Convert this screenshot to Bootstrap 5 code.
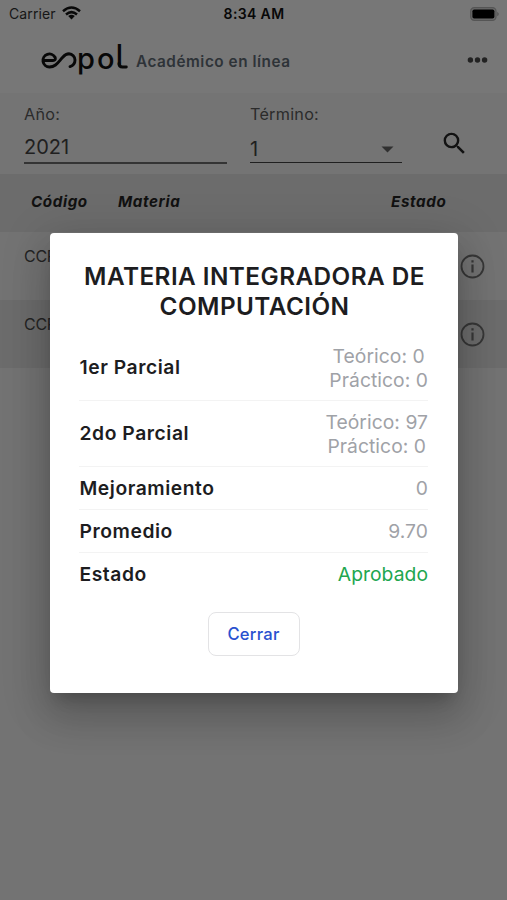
<!DOCTYPE html>
<html lang="es">
<head>
<meta charset="utf-8">
<meta name="viewport" content="width=device-width, initial-scale=1">
<title>Académico en línea</title>
<link rel="stylesheet" href="https://cdn.jsdelivr.net/npm/bootstrap@5.3.0/dist/css/bootstrap.min.css">
<style>
  body { font-family: Inter, "Liberation Sans", sans-serif; background: #737373; color: #1c1c1c; height: 900px; overflow: hidden; line-height: 1.2; }
  svg { display: block; flex: none; }
  .status { height: 28px; background: #777; font-size: 14px; color: #161616; padding: 0 8px 0 9px; }
  .status > * { flex: 1 1 0; }
  .carrier { letter-spacing: .12px; margin-right: 5px; }
  .clock { color: #080808; letter-spacing: .37px; }
  .appbar { height: 65px; background: #777; padding: 0 19px 0 41px; }
  .brand-name { font-size: 15.3px; color: #2e3338; margin: 3px 0 0 8px; letter-spacing: .54px; }
  .filters { height: 81px; background: #747474; padding: 11px 0 0 24px; }
  .filters label { font-size: 16.2px; line-height: 20px; color: #2b2b2b; letter-spacing: .25px; }
  .field { height: 40px; font-size: 20px; color: #202020; }
  .year { width: 203px; border-bottom: 2px solid #343434; padding-bottom: 3px; margin-right: 23px; }
  .term { width: 152px; border-bottom: 1.5px solid #202020; padding: 0 8px 1px 0; height: 39px; }
  .term svg { margin-bottom: 8px; }
  .search { margin: 25px 0 0 38px; }
  .gridrow { display: grid; grid-template-columns: 87px 273px 1fr; padding-left: 31px; }
  .gridhead { height: 58px; background: #6c6c6c; font-size: 15.2px; color: #111; letter-spacing: .6px; padding-bottom: 1px; }
  .gridhead span { font-weight: 650; }
  .course { height: 68px; padding: 0 22px 0 24px; font-size: 16px; color: #242424; }
  .course span { margin-bottom: 19px; letter-spacing: -.3px; }
  .course.alt { background: #6c6c6c; }
  .sheet { width: 408px; height: 460px; top: 233px; left: 50px; z-index: 10; background: #fff; border-radius: 4px; padding: 29px 30px 0 29px;
    box-shadow: 0 11px 15px -7px rgba(0,0,0,.2), 0 24px 38px 3px rgba(0,0,0,.14), 0 9px 46px 8px rgba(0,0,0,.12); }
  .sheet h1 { font-size: 24.3px; line-height: 29.5px; letter-spacing: .45px; color: #1d1d1f; margin: 0 -11px 14px -9px; }
  .grade { height: 43px; border-bottom: 1px solid #f3f3f3; font-size: 19.3px; line-height: 23.5px; color: #1d1d1f; letter-spacing: .05px; }
  .grade .fw-semibold { letter-spacing: .55px; padding: 1px 0 0 .5px; }
  .grade.tall { height: 66px; }
  .grade:last-child { border-bottom: 0; }
  .score { color: #9fa2a7; padding-top: 2px; }
  .passed { color: #21a64f; letter-spacing: .05px; }
  .btn-close-sheet { width: 92px; height: 44px; border: 1.5px solid #e3e3e5; border-radius: 8px; color: #2951cf; font-size: 16.6px; font-weight: 500; letter-spacing: .25px; padding: 0; background: #fff; margin-top: 16px; }
</style>
</head>
<body>
<div class="status d-flex align-items-center">
  <div class="d-flex align-items-center"><span class="carrier">Carrier</span>
    <svg width="21" height="16" viewBox="0 0 21 16" fill="none" stroke="#080808" stroke-width="2.500"><path d="M2 5.200Q10.500-2.200 19 5.200M5 8.500Q10.500 3.800 16 8.500"/><path d="M7.200 10.100Q10.500 7.400 13.800 10.100L10.500 13.500Z" fill="#080808" stroke="none"/></svg>
  </div>
  <div class="clock fw-semibold text-center">8:34 AM</div>
  <div class="d-flex justify-content-end">
    <svg width="29" height="14" viewBox="0 0 29 14"><rect x=".7" y=".7" width="25.300" height="12.600" rx="3.600" fill="#6a6a6a" stroke="#555" stroke-width="1.200"/><rect x="2.400" y="2.400" width="22" height="9.200" rx="1.800" fill="#000"/><path d="M27.300 4.700q2.800 2.300 0 4.600Z" fill="#505050"/></svg>
  </div>
</div>

<header class="appbar d-flex align-items-center">
  <svg width="87" height="60" viewBox="0 -10 87 60" aria-label="espol" fill="#080808">
    <path d="M2.500 19.500H12Q15 19.500 14.200 16.500A6.500 6.500 0 1 0 8.500 26C14.500 26 17 21.500 21.500 16.500C24 13.700 25.500 12.800 28 12.800A6.200 6.200 0 0 1 34 19Q34 24 29 25.600" fill="none" stroke="#080808" stroke-width="2.900" stroke-linecap="round" stroke-linejoin="round"/>
    <text x="36" y="27.700" font-size="29" font-weight="500">p</text>
    <text x="56" y="27.700" font-size="29" font-weight="500">o</text>
    <text x="74.700" y="23.500" font-size="29" font-weight="500">l</text>
    <path d="M78 22.500Q78 26 81.500 26H85.300" fill="none" stroke="#080808" stroke-width="2.900" stroke-linecap="round"/>
  </svg>
  <div class="brand-name fw-semibold">Académico en línea</div>
  <svg class="ms-auto" width="21" height="8" viewBox="0 0 21 8" fill="#222"><circle cx="3.400" cy="3" r="2.700"/><circle cx="10.500" cy="3" r="2.700"/><circle cx="17.600" cy="3" r="2.700"/></svg>
</header>

<section class="filters d-flex">
  <div><label class="d-block">Año:</label><div class="field year d-flex align-items-end">2021</div></div>
  <div><label class="d-block">Término:</label>
    <div class="field term d-flex align-items-end justify-content-between"><span>1</span>
      <svg width="13" height="7" viewBox="0 0 13 7"><path d="M.5.500H12.500L6.500 6.500Z" fill="#303030"/></svg></div></div>
  <svg class="search" width="29" height="29" viewBox="0 0 24 24" fill="#121212"><path d="M15.500 14h-.79l-.28-.27A6.471 6.471 0 0 0 16 9.500 6.500 6.500 0 1 0 9.500 16c1.610 0 3.090-.59 4.230-1.570l.27.280v.790l5 4.990L20.490 19l-4.990-5zm-6 0C7.010 14 5 11.990 5 9.500S7.010 5 9.500 5 14 7.010 14 9.500 11.990 14 9.500 14z"/></svg>
</section>

<main>
  <div class="gridrow gridhead align-items-center fst-italic"><span>Código</span><span>Materia</span><span>Estado</span></div>
  <div class="course d-flex align-items-center justify-content-between"><span>CCPG</span>
    <svg width="25" height="25" viewBox="0 0 25 25" fill="none" stroke="#373737" stroke-width="1.800"><circle cx="12.500" cy="12.500" r="11"/><path d="M12.500 6.200v2.300M12.500 10.500v8" stroke-width="2.200"/></svg></div>
  <div class="course alt d-flex align-items-center justify-content-between"><span>CCPG</span>
    <svg width="25" height="25" viewBox="0 0 25 25" fill="none" stroke="#373737" stroke-width="1.800"><circle cx="12.500" cy="12.500" r="11"/><path d="M12.500 6.200v2.300M12.500 10.500v8" stroke-width="2.200"/></svg></div>
</main>

<div class="sheet position-absolute" role="dialog" aria-modal="true">
  <h1 class="fw-semibold text-center">MATERIA INTEGRADORA DE<br>COMPUTACIÓN</h1>
  <div>
    <div class="grade tall d-flex align-items-center justify-content-between"><span class="fw-semibold">1er Parcial</span><span class="score text-center">Teórico: 0<br>Práctico: 0</span></div>
    <div class="grade tall d-flex align-items-center justify-content-between"><span class="fw-semibold">2do Parcial</span><span class="score text-center">Teórico: 97<br>Práctico: 0</span></div>
    <div class="grade d-flex align-items-center justify-content-between"><span class="fw-semibold">Mejoramiento</span><span class="score">0</span></div>
    <div class="grade d-flex align-items-center justify-content-between"><span class="fw-semibold">Promedio</span><span class="score">9.70</span></div>
    <div class="grade d-flex align-items-center justify-content-between"><span class="fw-semibold">Estado</span><span class="passed">Aprobado</span></div>
  </div>
  <div class="text-center"><button class="btn btn-close-sheet" type="button">Cerrar</button></div>
</div>
<script src="https://cdn.jsdelivr.net/npm/bootstrap@5.3.0/dist/js/bootstrap.bundle.min.js"></script>
</body>
</html>
